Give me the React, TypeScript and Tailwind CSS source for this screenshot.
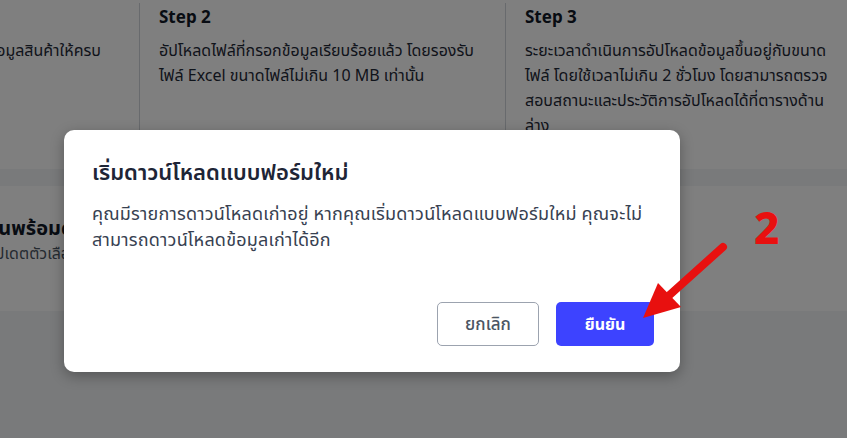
import React from "react";

const steps = [
  {
    id: 1,
    title: "Step 1",
    text: "ดาวน์โหลดแบบฟอร์มแล้วกรอกข้อมูลสินค้าให้ครบ",
  },
  {
    id: 2,
    title: "Step 2",
    text: "อัปโหลดไฟล์ที่กรอกข้อมูลเรียบร้อยแล้ว โดยรองรับไฟล์ Excel ขนาดไฟล์ไม่เกิน 10 MB เท่านั้น",
  },
  {
    id: 3,
    title: "Step 3",
    text: "ระยะเวลาดำเนินการอัปโหลดข้อมูลขึ้นอยู่กับขนาดไฟล์ โดยใช้เวลาไม่เกิน 2 ชั่วโมง โดยสามารถตรวจสอบสถานะและประวัติการอัปโหลดได้ที่ตารางด้านล่าง",
  },
];

const Arrow = () => (
  <svg className="absolute left-0 top-0" width="847" height="438" viewBox="0 0 847 438">
    <line x1="723" y1="247" x2="664" y2="300" stroke="#e8100f" strokeWidth="8" strokeLinecap="round" />
    <polygon points="643,318 658,283 681,307" fill="#e8100f" />
  </svg>
);

const App = () => {
  return (
    <div
      className="relative h-[438px] w-[847px] overflow-hidden bg-[#f3f4f6]"
      style={{ fontFamily: '"Noto Sans", "Noto Sans Thai", sans-serif' }}
    >
      {/* page behind the dialog, scrolled sideways */}
      <div className="-ml-[227px] w-[1300px]">
        <div className="flex bg-white pb-[31px] pt-[3px]">
          {steps.map((s) => (
            <div
              key={s.id}
              className={`w-[366px] pl-[19px] pr-[30px] ${s.id > 1 ? "border-l border-[#d1d5db]" : ""}`}
            >
              <h3 className="text-[17px] font-bold leading-[28px] text-[#111827]">{s.title}</h3>
              <p
                className={`mt-[7px] text-[16px] leading-[25px] text-[#1f2937] ${s.id === 1 ? "whitespace-nowrap" : ""}`}
              >
                {s.text}
              </p>
            </div>
          ))}
        </div>

        <div className="mt-[17px] h-[125px] bg-white px-[20px] pt-[28px]">
          <h2 className="ml-[23px] whitespace-nowrap text-[20px] font-bold leading-[28px] text-[#111827]">
            ไฟล์ข้อมูลสินค้าของร้านพร้อมดาวน์โหลด
          </h2>
          <p className="whitespace-nowrap text-[16px] leading-[22px] text-[#4b5563]">
            ดาวน์โหลดแบบฟอร์มล่าสุดเพื่ออัปเดตตัวเลือกสินค้า
          </p>
        </div>
      </div>

      {/* overlay + dialog */}
      <div className="absolute inset-0 bg-black/50 pl-[64px] pt-[130px]">
        <div className="w-[616px] rounded-[10px] bg-white pb-[26px] pl-[28px] pr-[26px] pt-[25px] shadow-[0_4px_14px_rgba(0,0,0,0.3)]">
          <h2 className="text-[22px] font-semibold leading-[32px] text-[#1e2536]">
            เริ่มดาวน์โหลดแบบฟอร์มใหม่
          </h2>
          <p className="mt-[13px] text-[18px] leading-[26px] tracking-[0.2px] text-[#374151]">
            คุณมีรายการดาวน์โหลดเก่าอยู่ หากคุณเริ่มดาวน์โหลดแบบฟอร์มใหม่ คุณจะไม่สามารถดาวน์โหลดข้อมูลเก่าได้อีก
          </p>
          <div className="mt-[50px] flex justify-end gap-[17px]">
            <button className="h-[44px] w-[102px] rounded-[5px] border border-[#9ca3af] bg-white text-[17px] font-medium text-[#4b5563]">
              ยกเลิก
            </button>
            <button className="h-[44px] w-[98px] rounded-[5px] bg-[#3d43ff] text-[16px] font-bold text-white">
              ยืนยัน
            </button>
          </div>
        </div>
      </div>

      {/* annotation */}
      <Arrow />
      <div className="absolute left-[754px] top-[203px] text-[44px] font-extrabold leading-[48px] text-[#e8100f]">
        2
      </div>
    </div>
  );
};

export default App;
